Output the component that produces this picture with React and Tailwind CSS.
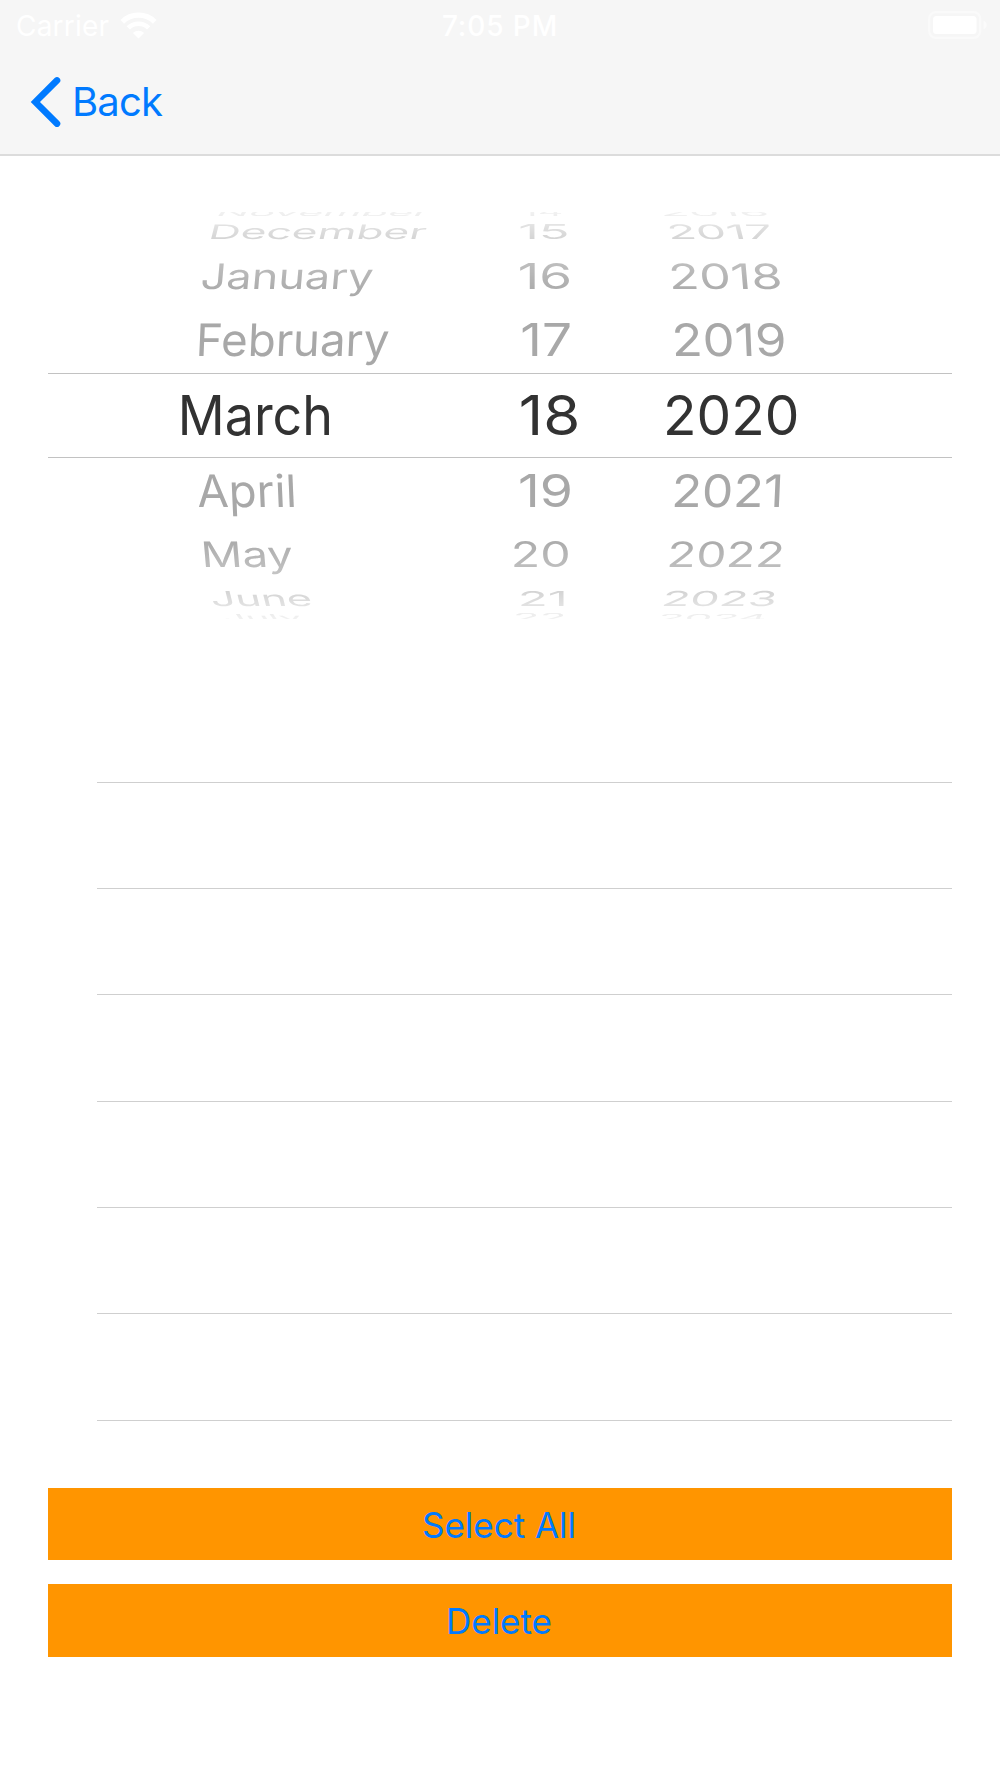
import React from 'react';

const WHEEL_FONT = 55;
const CAP_HEIGHT = 0.727;

// each cell: [label, left edge, width, lean in degrees]
const ROWS = [
  { height: 16, cap: 7, cells: [['November', 219, 212, -35], ['14', 523, 38.5, 0], ['2016', 662, 105, 25]] },
  { height: 24, cap: 14.6, cells: [['December', 211.3, 215.5, -14], ['15', 520, 47.3, 0], ['2017', 669.5, 102, 14]] },
  { height: 63, cap: 25.5, cells: [['January', 202, 171.3, -5], ['16', 519.6, 49.5, 0], ['2018', 671.5, 108.5, 5]] },
  { height: 66, cap: 32.5, cells: [['February', 199, 190, -2.5], ['17', 522.3, 47.7, 0], ['2019', 674.8, 109.3, 2.5]] },
  { height: 84, cap: 40.3, selected: true, cells: [['March', 181.6, 148, 0], ['18', 521, 56, 0], ['2020', 667, 129.7, 0]] },
  { height: 67, cap: 32.5, cells: [['April', 197.6, 96.6, 2.5], ['19', 520, 50, 0], ['2021', 675, 105.4, -2.5]] },
  { height: 60, cap: 25.5, cells: [['May', 203.7, 89, 5], ['20', 514.3, 54, 0], ['2022', 670, 112.3, -5]] },
  { height: 27, cap: 15, cells: [['June', 211, 100, 14], ['21', 521.3, 42.7, 0], ['2023', 664.5, 111, -14]] },
  { height: 12, cap: 7, cells: [['July', 223, 79, 35], ['22', 516, 48, 0], ['2024', 660, 106, -25]] },
];

const LINES = [0, 1, 2, 3, 4, 5, 6];

const ctx = document.createElement('canvas').getContext('2d');

// squash a label so that it follows the curve of the wheel
function wheelTransform(text, left, width, lean, cap) {
  ctx.font = `${WHEEL_FONT}px Inter`;
  const m = ctx.measureText(text);
  const sy = cap / (WHEEL_FONT * CAP_HEIGHT);
  const spread = Math.abs(Math.tan((lean * Math.PI) / 180)) * cap * 0.5;
  const sx = (width - spread) / (m.actualBoundingBoxLeft + m.actualBoundingBoxRight);
  const x = left + spread / 2 + m.actualBoundingBoxLeft * sx;
  return `translateX(${x}px) skewX(${lean}deg) scale(${sx}, ${sy})`;
}

function WheelRow({ row }) {
  return (
    <div
      className={`grid shrink-0 items-center ${row.selected ? 'text-[#323232]' : 'text-[#a8a8a8]'}`}
      style={{ height: row.height }}
    >
      {row.cells.map(([text, left, width, lean]) => (
        <span
          key={text}
          className="col-start-1 row-start-1 w-max origin-left text-[55px] leading-[0px] whitespace-nowrap"
          style={{ transform: wheelTransform(text, left, width, lean, row.cap) }}
        >
          {text}
        </span>
      ))}
    </div>
  );
}

function Wifi() {
  return (
    <svg className="ml-[11px] h-[27px] w-[37px]" viewBox="0 0 37 27" fill="none" stroke="#fff">
      <path d="M2.2 9.8a23.2 23.2 0 0 1 32.6 0" strokeWidth="5.2" />
      <path d="M8.3 15.9a14.6 14.6 0 0 1 20.4 0" strokeWidth="4.7" />
      <path d="M12.9 20.9a8.4 8.4 0 0 1 11.2 0l-5.6 5.6z" fill="#fff" stroke="none" />
    </svg>
  );
}

function Battery() {
  return (
    <svg className="ml-auto h-[29px] w-[61px]" viewBox="0 0 61 29">
      <rect x="1.2" y="1.2" width="51" height="25.6" rx="6.5" fill="none" stroke="#fff" strokeOpacity=".45" strokeWidth="2.2" />
      <rect x="5" y="5" width="43.6" height="18" rx="3.5" fill="#fff" />
      <path d="M55.5 9.5c4.5 2 4.5 7 0 9z" fill="#fff" fillOpacity=".5" />
    </svg>
  );
}

export default function App() {
  return (
    <div className="flex h-[1778px] w-[1000px] flex-col overflow-hidden bg-white font-[Inter,sans-serif]">
      <header className="h-[156px] shrink-0 border-b-2 border-[#dcdcdc] bg-[#f6f6f6]">
        <div className="grid h-[50px] grid-cols-3 items-center text-white">
          <div className="flex items-center pl-4">
            <span className="pt-px text-[28px] leading-none tracking-[0.2px]">Carrier</span>
            <Wifi />
          </div>
          <span className="pt-px text-center text-[28px] leading-none font-medium tracking-[0.9px]">7:05 PM</span>
          <div className="flex pr-[11px]">
            <Battery />
          </div>
        </div>
        <button className="flex items-center pt-[26px] pl-[30px] text-[#007aff]">
          <svg className="h-[52px] w-[32px]" viewBox="0 0 32 52" fill="none" stroke="currentColor" strokeWidth="6.6" strokeLinecap="round" strokeLinejoin="miter">
            <path d="M27 4.4 5.4 26 27 47.6" />
          </svg>
          <span className="ml-[10px] text-[40px] leading-[52px] tracking-[-0.8px]">Back</span>
        </button>
      </header>

      {/* Date wheel */}
      <section className="mt-14 grid h-[407px] shrink-0">
        <div className="col-start-1 row-start-1 flex h-[407px] flex-col overflow-hidden [mask-image:linear-gradient(to_bottom,rgba(0,0,0,.15)_0px,rgba(0,0,0,.32)_13px,rgba(0,0,0,.5)_28px,rgba(0,0,0,.74)_51px,rgba(0,0,0,.95)_77px,#000_110px,#000_297px,rgba(0,0,0,.95)_330px,rgba(0,0,0,.74)_356px,rgba(0,0,0,.5)_379px,rgba(0,0,0,.32)_394px,rgba(0,0,0,.15)_407px)]">
          <div className="-mt-2 flex flex-col">
            {ROWS.map((row) => (
              <WheelRow key={row.cells[0][0]} row={row} />
            ))}
          </div>
        </div>
        <div className="col-start-1 row-start-1 mx-[48.3px] mt-[161px] h-[85px] border-y border-[#c2c2c2]" />
      </section>

      {/* Empty list */}
      <section className="mt-[57.7px] mr-[48.3px] ml-[96.6px] shrink-0">
        {LINES.map((n) => (
          <div key={n} className="flex h-[106.28px] flex-col justify-end">
            <div className="h-px bg-[#cfcfcf]" />
          </div>
        ))}
      </section>

      <div className="mt-[67.3px] flex flex-col gap-[24.2px] px-[48.3px]">
        <button className="h-[72.4px] bg-[#ff9500] pt-0.5 pr-0.5 text-[35px] leading-none text-[#007aff]">Select All</button>
        <button className="h-[72.4px] bg-[#ff9500] pt-0.5 pr-0.5 text-[35px] leading-none text-[#007aff]">Delete</button>
      </div>
    </div>
  );
}
